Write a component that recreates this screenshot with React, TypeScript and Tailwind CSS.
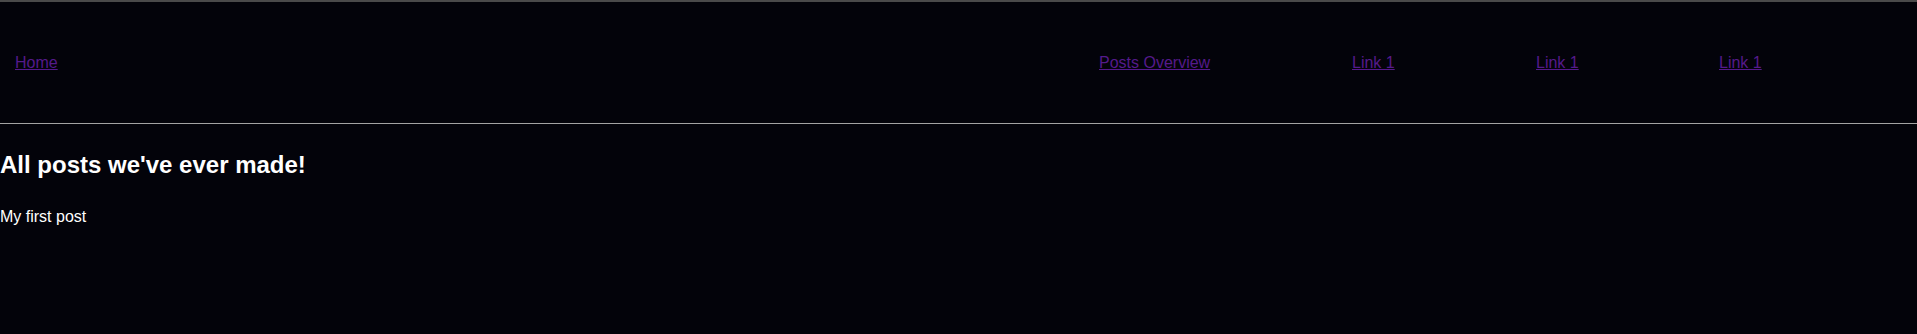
const links = ["Posts Overview", "Link 1", "Link 1", "Link 1"];

export default function App() {
	return (
		<div className="min-h-[334px] bg-[#03030a] text-white font-['Liberation_Sans',Arial,sans-serif] text-[16px]">
			{/* Header */}
			<header className="border-t-2 border-b border-t-[#4a4a4a] border-b-[#a3a3a3]">
				<nav className="flex items-center h-[121px]">
					<a href="#" className="ml-[15px] text-[#551a8b] underline">Home</a>
					<ul className="ml-auto grid grid-cols-[253px_184px_183px_198px]">
						{links.map((label, i) => (
							<li key={i}>
								<a href="#" className="text-[#551a8b] underline">{label}</a>
							</li>
						))}
					</ul>
				</nav>
			</header>

			{/* Content */}
			<main>
				<h2 className="mt-[23px] text-[24px] font-bold leading-normal">All posts we've ever made!</h2>
				<p className="mt-[22px] leading-normal">My first post</p>
			</main>
		</div>
	);
}
